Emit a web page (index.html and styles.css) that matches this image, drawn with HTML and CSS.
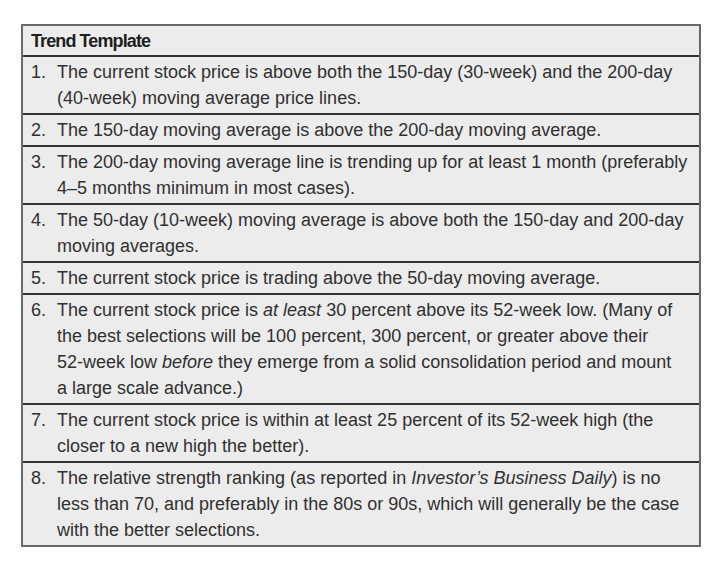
FILE: index.html
```html
<!DOCTYPE html>
<html>
<head>
<meta charset="utf-8">
<link rel="stylesheet" href="styles.css">
</head>
<body>
<div class="table">
  <div class="head">Trend Template</div>
  <div class="row"><span class="num">1.</span><span class="txt">The current stock price is above both the 150-day (30-week) and the 200-day (40-week) moving average price lines.</span></div>
  <div class="row"><span class="num">2.</span><span class="txt">The 150-day moving average is above the 200-day moving average.</span></div>
  <div class="row"><span class="num">3.</span><span class="txt">The 200-day moving average line is trending up for at least 1 month (preferably 4–5 months minimum in most cases).</span></div>
  <div class="row"><span class="num">4.</span><span class="txt">The 50-day (10-week) moving average is above both the 150-day and 200-day moving averages.</span></div>
  <div class="row"><span class="num">5.</span><span class="txt">The current stock price is trading above the 50-day moving average.</span></div>
  <div class="row"><span class="num">6.</span><span class="txt">The current stock price is <i>at least</i> 30 percent above its <span class="nw">52-week</span> low. (Many of the best selections will be 100 percent, 300 percent, or greater above their <span class="nw">52-week</span> low <i>before</i> they emerge from a solid consolidation period and mount <span class="nw">a large</span> scale advance.)</span></div>
  <div class="row"><span class="num">7.</span><span class="txt">The current stock price is within at least 25 percent of its <span class="nw">52-week</span> high (the closer to a new high the better).</span></div>
  <div class="row"><span class="num">8.</span><span class="txt">The relative strength ranking (as reported in <i>Investor’s Business Daily</i>) is no less than 70, and preferably in the 80s or 90s, which will generally be the case with the better selections.</span></div>
</div>
</body>
</html>
```
FILE: styles.css
```css
html, body {
  margin: 0;
  padding: 0;
  background: #ffffff;
}
body {
  padding: 24px 0 0 21px;
  font-family: "Liberation Sans", Arial, sans-serif;
  color: #303030;
}
.table {
  width: 676px;
  border: 2px solid #6a6a6a;
  background: #ececec;
}
.head {
  font-weight: bold;
  font-size: 18px;
  line-height: 20px;
  padding: 5px 8px 4px 8px;
  color: #1e1e1e;
  letter-spacing: -0.9px;
}
.row {
  display: flex;
  border-top: 2px solid #333333;
  font-size: 18px;
  line-height: 26px;
  padding: 2px 8px 2px 7px;
}
.num {
  flex: 0 0 26px;
  padding-left: 1px;
}
.txt {
  flex: 1;
}
.nw {
  white-space: nowrap;
}
```
